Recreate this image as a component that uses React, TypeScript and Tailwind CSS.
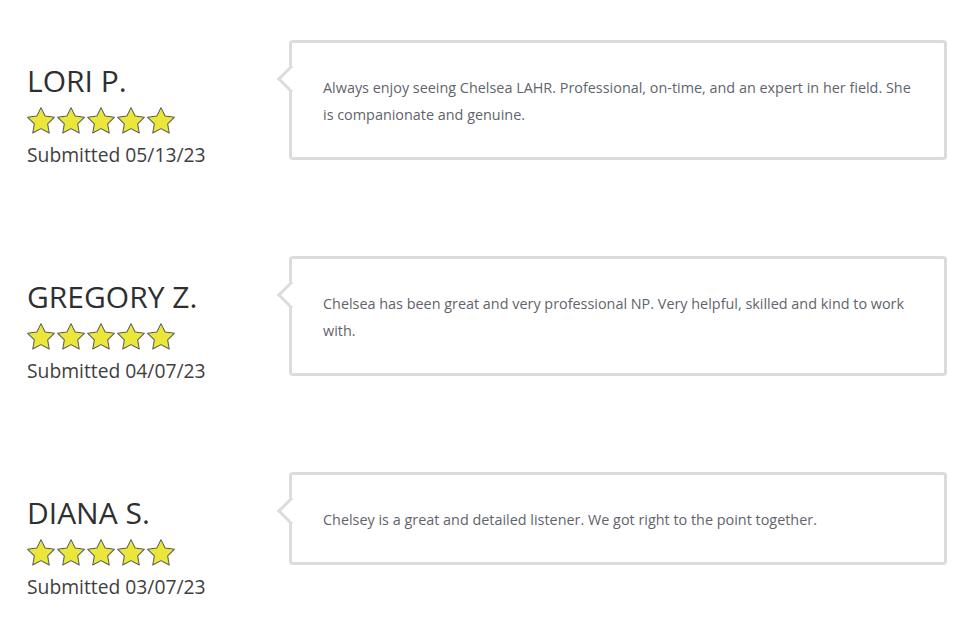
import React from "react";

type Review = { name: string; date: string; text: string };

const reviews: Review[] = [
  {
    name: "LORI P.",
    date: "Submitted 05/13/23",
    text: "Always enjoy seeing Chelsea LAHR. Professional, on-time, and an expert in her field. She is companionate and genuine.",
  },
  {
    name: "GREGORY Z.",
    date: "Submitted 04/07/23",
    text: "Chelsea has been great and very professional NP. Very helpful, skilled and kind to work with.",
  },
  {
    name: "DIANA S.",
    date: "Submitted 03/07/23",
    text: "Chelsey is a great and detailed listener. We got right to the point together.",
  },
];

function Star() {
  return (
    <svg width="30" height="30" viewBox="1 1 22 22" className="block">
      <path
        d="M12 2.2l3.02 6.12 6.76.98-4.89 4.77 1.15 6.73L12 17.62l-6.04 3.18 1.15-6.73L2.22 9.3l6.76-.98L12 2.2z"
        fill="#ebe63a"
        stroke="#5a5a5a"
        strokeWidth="0.75"
        strokeLinejoin="round"
      />
    </svg>
  );
}

function Row({ r }: { r: Review }) {
  return (
    <div className="flex h-[216px] shrink-0">
      <div className="w-[262px] shrink-0 pt-[23px]">
        <div className="text-[30px] leading-[36px] text-[#2f2f2f]">{r.name}</div>
        <div className="mt-[7px] flex -ml-[1px]">
          <Star />
          <Star />
          <Star />
          <Star />
          <Star />
        </div>
        <div className="mt-[7px] text-[19.3px] leading-[24px] text-[#3f3f3f]">{r.date}</div>
      </div>
      <div className="relative h-fit w-[658px] shrink-0 rounded-[4px] border-[3px] border-[#dcdcdc] bg-white px-[31px] pt-[31px] pb-[29px]">
        <div className="absolute left-[-11.5px] top-[26px] h-[20px] w-[20px] rotate-45 border-b-[3px] border-l-[3px] border-[#dcdcdc] bg-white" />
        <p className="relative text-[14.4px] leading-[27px] text-[#5f646c]">{r.text}</p>
      </div>
    </div>
  );
}

export default function App() {
  return (
    <div
      className="flex h-[636px] w-[972px] flex-col overflow-hidden bg-white pl-[27px] pt-[40px]"
      style={{ fontFamily: '"Open Sans", "Noto Sans", sans-serif' }}
    >
      {reviews.map((r) => (
        <Row key={r.name} r={r} />
      ))}
    </div>
  );
}
